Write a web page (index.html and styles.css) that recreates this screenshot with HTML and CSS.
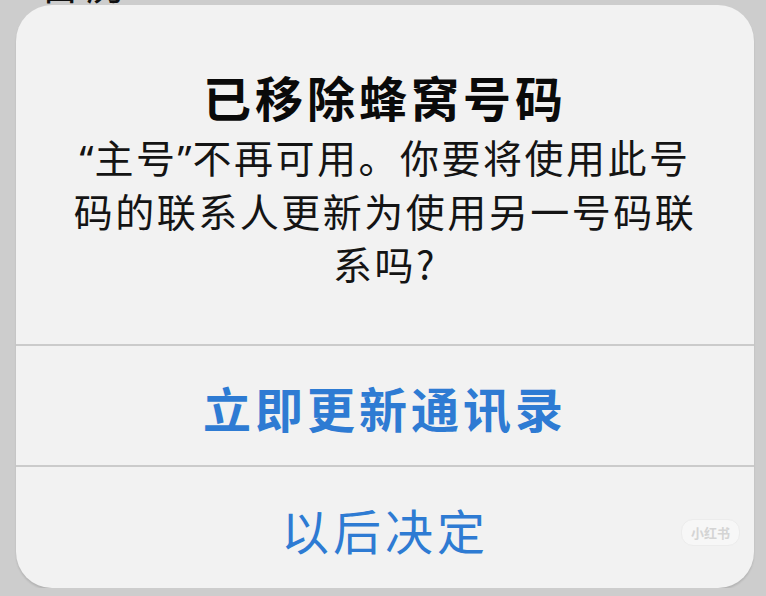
FILE: index.html
```html
<!DOCTYPE html>
<html lang="zh-CN">
<head>
    <meta charset="UTF-8">
    <meta name="viewport" content="width=device-width, initial-scale=1">
    <title>已移除蜂窝号码</title>
    <link rel="stylesheet" href="styles.css">
</head>
<body>

    <div class="top-strip"><span class="top-label">日历</span></div>

    <div class="alert">
        <div class="alert-content">
            <h1 class="alert-title">已移除蜂窝号码</h1>
            <p class="alert-message"><span class="q">“</span>主号<span class="q">”</span>不再可用。你要将使用此号码的联系人更新为使用另一号码联系吗?</p>
        </div>
        <div class="alert-btn primary">立即更新通讯录</div>
        <div class="alert-btn">以后决定</div>
        <div class="badge">小红书</div>
    </div>

</body>
</html>
```

FILE: styles.css
```css
* {box-sizing: border-box}

body {
    margin: 0;
    background-color: #cdcdcd;
    font-family: "Noto Sans CJK SC", "Noto Sans", sans-serif;
    overflow: hidden;
}

/* ----- Bande du haut (texte coupé) ----- */

.top-strip {
    height: 5px;
    overflow: hidden;
    padding-left: 40px;
}

.top-label {
    display: block;
    margin-top: -37px;
    font-size: 40px;
    line-height: 40px;
    color: #111;
    letter-spacing: 6px;
}

/* ----- Alerte ----- */

.alert {
    position: relative;
    width: 738px;
    height: 583px;
    margin-left: 16px;
    background-color: #f2f2f2;
    border-radius: 36px;
    box-shadow: 0 2px 2px rgba(0, 0, 0, 0.12);
    display: flex;
    flex-direction: column;
    overflow: hidden;
}

.alert-content {
    height: 341px;
    padding-top: 61px;
    border-bottom: 2px solid #cbcbcb;
    text-align: center;
}

.alert-title {
    margin: 0;
    font-size: 48px;
    line-height: 60px;
    font-weight: 700;
    letter-spacing: 4px;
    color: #0a0a0a;
}

.alert-message {
    width: 650px;
    margin: 4px auto 0;
    font-size: 39px;
    line-height: 53px;
    letter-spacing: 2.5px;
    color: #141414;
}

/* guillemets étroits, comme sur iOS */
.q {
    font-family: "Noto Sans", sans-serif;
    letter-spacing: 1px;
}

.alert-btn {
    height: 121px;
    display: flex;
    justify-content: center;
    align-items: center;
    padding-top: 3px;
    font-size: 48px;
    letter-spacing: 4px;
    color: #2e7bd3;
}

.alert-btn.primary {
    font-weight: 700;
    border-bottom: 2px solid #cbcbcb;
}

/* ----- Filigrane ----- */

.badge {
    position: absolute;
    right: 14px;
    bottom: 42px;
    padding: 3px 9px;
    border-radius: 12px;
    background-color: #f7f7f7;
    border: 1px solid #ececec;
    font-size: 13px;
    font-weight: 700;
    color: #d4d4d4;
}
```
